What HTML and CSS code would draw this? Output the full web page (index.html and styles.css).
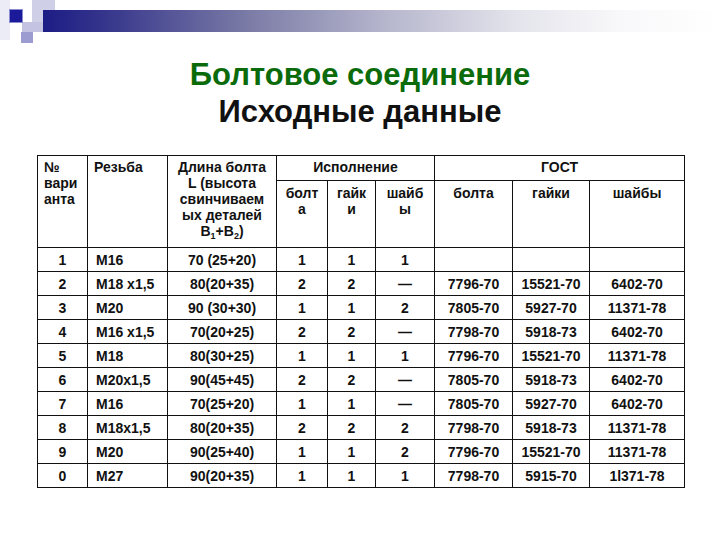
FILE: index.html
```html
<!DOCTYPE html>
<html lang="ru">
<head>
<meta charset="utf-8">
<title>Болтовое соединение</title>
<link rel="stylesheet" href="styles.css">
</head>
<body>
<div class="deco">
  <div class="sq strip"></div>
  <div class="sq light"></div>
  <div class="sq mid"></div>
  <div class="sq bar"></div>
  <div class="sq dark"></div>
  <div class="sq low"></div>
</div>
<h1 class="title"><span class="t1">Болтовое соединение</span><span class="t2">Исходные данные</span></h1>
<table class="data">
  <colgroup>
    <col class="c1"><col class="c2"><col class="c3"><col class="c4"><col class="c5"><col class="c6"><col class="c7"><col class="c8"><col class="c9">
  </colgroup>
  <thead>
    <tr class="h1">
      <th rowspan="2" class="left">№<br>вари<br>анта</th>
      <th rowspan="2" class="left">Резьба</th>
      <th rowspan="2">Длина болта<br>L (высота<br>свинчиваем<br>ых деталей<br>В<sub>1</sub>+В<sub>2</sub>)</th>
      <th colspan="3">Исполнение</th>
      <th colspan="3">ГОСТ</th>
    </tr>
    <tr class="h2">
      <th>болт<br>а</th><th>гайк<br>и</th><th>шайб<br>ы</th>
      <th>болта</th><th>гайки</th><th>шайбы</th>
    </tr>
  </thead>
  <tbody>
    <tr><td>1</td><td class="left">М16</td><td>70 (25+20)</td><td>1</td><td>1</td><td>1</td><td></td><td></td><td></td></tr>
    <tr><td>2</td><td class="left">М18 x1,5</td><td>80(20+35)</td><td>2</td><td>2</td><td>—</td><td>7796-70</td><td>15521-70</td><td>6402-70</td></tr>
    <tr><td>3</td><td class="left">М20</td><td>90 (30+30)</td><td>1</td><td>1</td><td>2</td><td>7805-70</td><td>5927-70</td><td>11371-78</td></tr>
    <tr><td>4</td><td class="left">М16 x1,5</td><td>70(20+25)</td><td>2</td><td>2</td><td>—</td><td>7798-70</td><td>5918-73</td><td>6402-70</td></tr>
    <tr><td>5</td><td class="left">М18</td><td>80(30+25)</td><td>1</td><td>1</td><td>1</td><td>7796-70</td><td>15521-70</td><td>11371-78</td></tr>
    <tr><td>6</td><td class="left">М20x1,5</td><td>90(45+45)</td><td>2</td><td>2</td><td>—</td><td>7805-70</td><td>5918-73</td><td>6402-70</td></tr>
    <tr><td>7</td><td class="left">М16</td><td>70(25+20)</td><td>1</td><td>1</td><td>—</td><td>7805-70</td><td>5927-70</td><td>6402-70</td></tr>
    <tr><td>8</td><td class="left">М18x1,5</td><td>80(20+35)</td><td>2</td><td>2</td><td>2</td><td>7798-70</td><td>5918-73</td><td>11371-78</td></tr>
    <tr><td>9</td><td class="left">М20</td><td>90(25+40)</td><td>1</td><td>1</td><td>2</td><td>7796-70</td><td>15521-70</td><td>11371-78</td></tr>
    <tr><td>0</td><td class="left">М27</td><td>90(20+35)</td><td>1</td><td>1</td><td>1</td><td>7798-70</td><td>5915-70</td><td>1l371-78</td></tr>
  </tbody>
</table>
</body>
</html>
```

FILE: styles.css
```css
html, body {
  margin: 0;
  padding: 0;
  background: #ffffff;
}
body {
  width: 720px;
  height: 540px;
  overflow: hidden;
  font-family: "Liberation Sans", Arial, sans-serif;
  color: #111111;
}
.deco {
  position: relative;
  height: 46px;
}
.sq { position: absolute; }
.strip { left: 0; top: 0; width: 10px; height: 40px; background: #ececf6; }
.light { left: 32px; top: 0; width: 23px; height: 22px; background: #cfcfe8; }
.mid { left: 22px; top: 22px; width: 21px; height: 10px; background: #c4c4e2; }
.bar {
  left: 43px; top: 10px; width: 677px; height: 22px;
  background: linear-gradient(to right, #1c1c86 0%, #35358c 9%, #7a7aa6 30%, #b4b4cc 50%, #e4e4ec 70%, #f8f8fa 85%, #ffffff 100%);
}
.dark { left: 10px; top: 10px; width: 12px; height: 12px; background: #1a1a9a; box-shadow: 0 0 0 1px #8a8ad0; }
.low { left: 21px; top: 32px; width: 12px; height: 11px; background: #9c9cd0; }

.title {
  margin: 10px 0 0 0;
  text-align: center;
  font-size: 31px;
  font-weight: bold;
  line-height: 37px;
}
.title span { display: block; }
.t1 { color: #0b6b0b; }
.t2 { color: #111111; }

.data {
  margin: 25px 0 0 37px;
  border-collapse: collapse;
  table-layout: fixed;
  width: 647px;
  font-size: 14px;
  font-weight: bold;
}
.c1 { width: 50px; }
.c2 { width: 80px; }
.c3 { width: 109px; }
.c4 { width: 51px; }
.c5 { width: 48px; }
.c6 { width: 59px; }
.c7 { width: 78px; }
.c8 { width: 77px; }
.c9 { width: 95px; }
.data th, .data td {
  border: 1px solid #111111;
  padding: 0 2px;
  text-align: center;
}
.data th {
  font-weight: bold;
  line-height: 16px;
  vertical-align: top;
  padding-top: 3px;
}
.data th.left { text-align: left; padding-left: 6px; }
.data td.left { text-align: left; padding-left: 8px; }
.h1 { height: 25px; }
.h2 { height: 67px; }
.h2 th { padding-top: 4px; }
.data td {
  height: 23px;
  line-height: 16px;
  vertical-align: middle;
  padding-top: 0;
  padding-bottom: 0;
}
sub { font-size: 9px; line-height: 0; vertical-align: -3px; }
```
